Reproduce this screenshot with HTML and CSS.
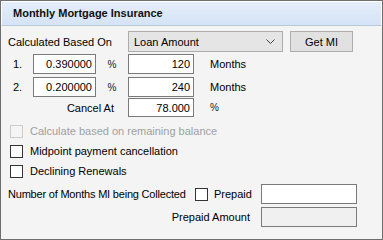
FILE: index.html
```html
<!DOCTYPE html>
<html lang="en">
  <head>
    <meta charset="UTF-8" />
    <title>Monthly Mortgage Insurance</title>
    <link rel="stylesheet" href="styles.css">
  </head>
  <body>
    <div class="panel">
      <div class="header">Monthly Mortgage Insurance</div>
      <div class="content">
        <div class="row row-based">
          <span class="label label-based">Calculated Based On</span>
          <div class="select">
            <span>Loan Amount</span>
            <svg width="9" height="5" viewBox="0 0 9 5"><path d="M0.5 0.5 L4.5 4.5 L8.5 0.5" fill="none" stroke="#444" stroke-width="1"/></svg>
          </div>
          <button class="btn">Get MI</button>
        </div>

        <div class="row row-rate">
          <span class="num">1.</span>
          <input class="field rate" type="text" value="0.390000" />
          <span class="pct">%</span>
          <input class="field term" type="text" value="120" />
          <span class="unit">Months</span>
        </div>
        <div class="row row-rate second">
          <span class="num">2.</span>
          <input class="field rate" type="text" value="0.200000" />
          <span class="pct">%</span>
          <input class="field term" type="text" value="240" />
          <span class="unit">Months</span>
        </div>
        <div class="row row-cancel">
          <span class="label label-cancel">Cancel At</span>
          <input class="field term" type="text" value="78.000" />
          <span class="unit pct-unit">%</span>
        </div>

        <div class="checks">
          <label class="check disabled"><span class="box"></span>Calculate based on remaining balance</label>
          <label class="check"><span class="box"></span>Midpoint payment cancellation</label>
          <label class="check"><span class="box"></span>Declining Renewals</label>
        </div>

        <div class="row row-months">
          <span class="label label-months">Number of Months MI being Collected</span>
          <span class="box"></span>
          <span class="prepaid">Prepaid</span>
          <input class="field wide" type="text" value="" />
        </div>
        <div class="row row-amount">
          <span class="label label-amount">Prepaid Amount</span>
          <input class="field wide locked" type="text" value="" disabled />
        </div>
      </div>
    </div>
  </body>
</html>
```

FILE: styles.css
```css
* {
  box-sizing: border-box;
}

body {
  margin: 0;
  font-family: "Liberation Sans", Arial, sans-serif;
  font-size: 11px;
  color: #000;
  background: #f4f4f4;
}

.panel {
  width: 383px;
  height: 240px;
  border: 1px solid #6f6f6f;
  background: #f4f4f4;
}

.header {
  height: 25px;
  padding-left: 11px;
  line-height: 23px;
  font-size: 11px;
  font-weight: bold;
  color: #111;
  border-top: 1px solid #fff;
  border-left: 1px solid #fff;
  border-right: 1px solid #fff;
  border-bottom: 1px solid #b9c8da;
  background: linear-gradient(#e6eefa, #d4e3f6);
}

.content {
  padding-left: 7px;
}

.row {
  display: flex;
  align-items: center;
  white-space: nowrap;
}

.row-based {
  height: 21px;
  margin-top: 5px;
}

.label-based {
  width: 120px;
}

.select {
  width: 155px;
  height: 21px;
  display: flex;
  align-items: center;
  justify-content: space-between;
  padding: 0 7px 0 5px;
  background: #e5e5e5;
  border: 1px solid #acacac;
}

.btn {
  width: 63px;
  height: 21px;
  margin-left: 7px;
  padding: 0;
  font: inherit;
  color: #000;
  background: #e1e1e1;
  border: 1px solid #adadad;
}

.field {
  height: 20px;
  padding: 0 3px;
  font: inherit;
  color: #000;
  text-align: right;
  background: #fff;
  border: 1px solid #7a7a7a;
}

.row-rate {
  height: 20px;
  margin-top: 2px;
}

.row-rate.second {
  margin-top: 3px;
}

.num {
  width: 25px;
  padding-left: 5px;
}

.rate {
  width: 63px;
}

.pct {
  width: 32px;
  text-align: center;
  font-size: 10px;
  color: #222;
}

.term {
  width: 66px;
}

.unit {
  margin-left: 16px;
}

.pct-unit {
  font-size: 10px;
  color: #222;
}

.row-cancel {
  height: 19px;
  margin-top: 1px;
}

.row-cancel .field {
  height: 19px;
}

.label-cancel {
  width: 120px;
  padding-right: 14px;
  text-align: right;
}

.checks {
  margin-top: 4px;
}

.check {
  display: flex;
  align-items: center;
  height: 20px;
  padding-left: 2px;
}

.check .box {
  margin-right: 7px;
}

.box {
  width: 13px;
  height: 13px;
  background: #fff;
  border: 1px solid #333;
  flex: none;
}

.check.disabled {
  color: #a0a0a0;
}

.check.disabled .box {
  border-color: #cccccc;
  background: #f4f4f4;
}

.row-months {
  height: 20px;
  margin-top: 3px;
}

.label-months {
  width: 187px;
  letter-spacing: -0.2px;
}

.prepaid {
  width: 47px;
  margin-left: 6px;
}

.wide {
  width: 96px;
}

.row-amount {
  height: 20px;
  margin-top: 3px;
}

.label-amount {
  width: 253px;
  padding-right: 11px;
  text-align: right;
}

.locked {
  background: #f0f0f0;
  border-color: #7a7a7a;
}
```
